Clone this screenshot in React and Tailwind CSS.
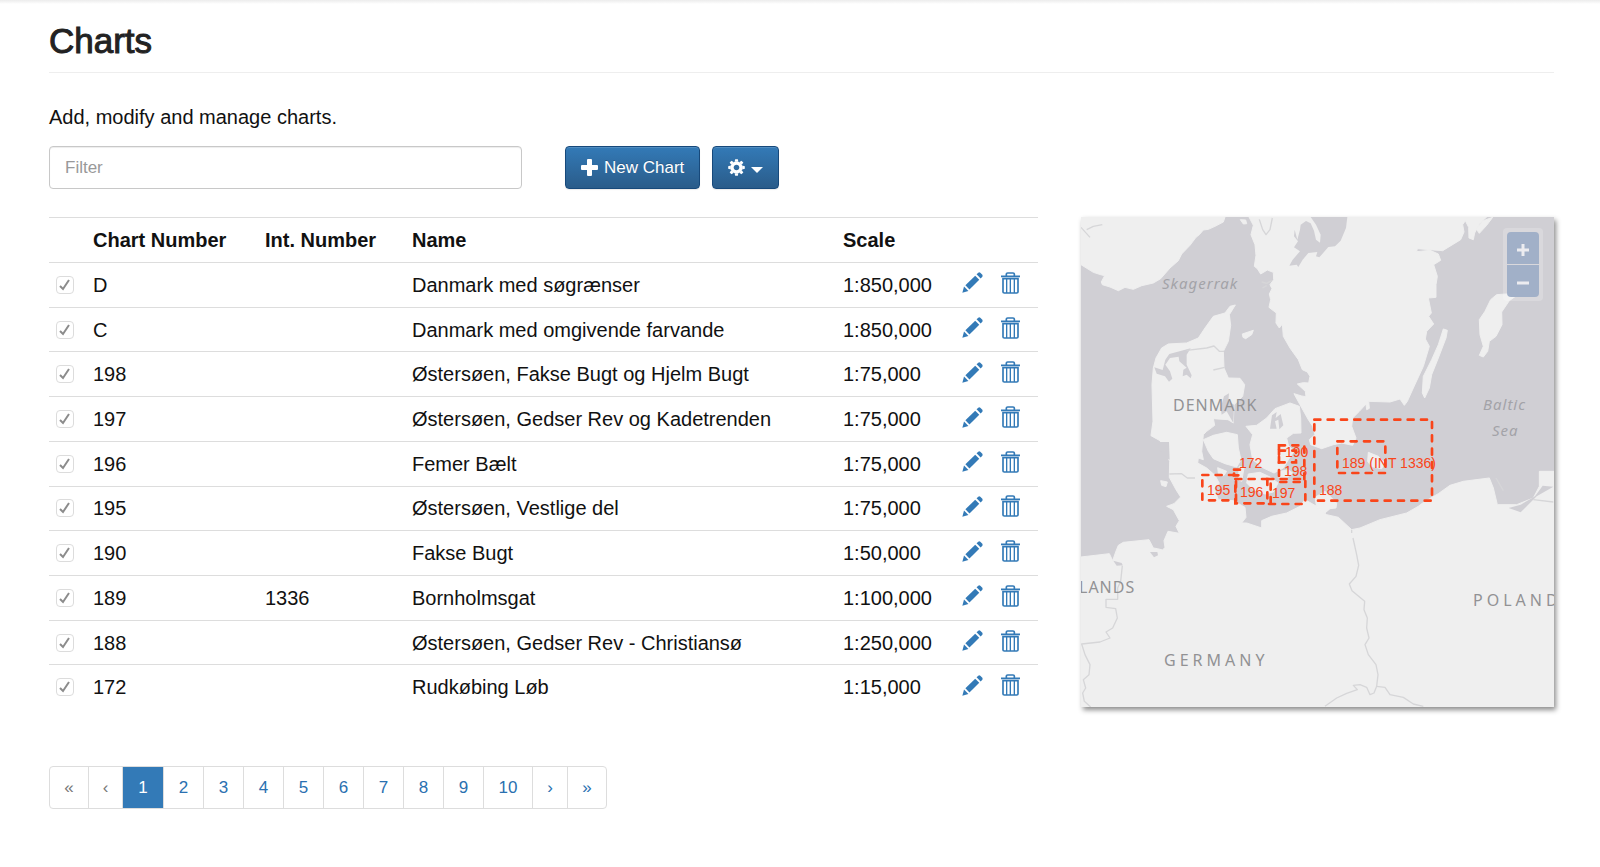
import React from "react";

const charts = [
  ["D", "", "Danmark med søgrænser", "1:850,000"],
  ["C", "", "Danmark med omgivende farvande", "1:850,000"],
  ["198", "", "Østersøen, Fakse Bugt og Hjelm Bugt", "1:75,000"],
  ["197", "", "Østersøen, Gedser Rev og Kadetrenden", "1:75,000"],
  ["196", "", "Femer Bælt", "1:75,000"],
  ["195", "", "Østersøen, Vestlige del", "1:75,000"],
  ["190", "", "Fakse Bugt", "1:50,000"],
  ["189", "1336", "Bornholmsgat", "1:100,000"],
  ["188", "", "Østersøen, Gedser Rev - Christiansø", "1:250,000"],
  ["172", "", "Rudkøbing Løb", "1:15,000"],
];

const land = [
  // Norway
  "M33 37H465L460 52L435 65L415 74L400 76L388 90L378 98L360 122L335 148L325 168L300 190L272 222L250 235L215 243L190 254L165 248L145 258L120 247L97 240L94 232L104 213L92 210L70 203L33 180Z",
  // Sweden
  "M537 37L550 62L543 90L555 120L558 152L553 185L562 192L572 208L592 196L610 203L611 225L600 240L606 252L598 268L602 285L597 308L619 325L618 355L628 370L637 358L640 395L660 430L685 465L697 495L712 502L720 515L716 535L700 534L682 538L706 560L708 576L695 574L672 567L690 600L715 645L728 665L735 690L718 705L722 720L755 732L790 720L815 715L848 722L858 700L845 665L848 640L868 620L888 598L890 615L898 611L896 590L960 592L990 583L1003 602L1012 590L1030 550L1060 485L1078 425L1066 403L1070 380L1091 358L1076 335L1084 325L1075 280L1098 278L1098 240L1102 215L1091 180L1112 167L1105 148L1080 137L1040 141L1042 132L1118 138L1172 105L1182 82L1178 60L1186 48L1196 68L1197 100L1210 105L1214 85L1228 57L1250 37Z",
  // Jutland and the mainland
  "M33 1057L118 1047L128 1068L137 1042L145 1022L160 1013L237 1005L250 1030L262 1032L278 1036L285 1028L282 1008L294 980L328 986L318 965L328 948L310 915L290 905L312 897L332 877L318 855L298 818L299 770L285 735L270 708L243 693L249 650L246 540L250 490L258 460L275 430L295 418L350 415L385 400L405 370L430 335L465 325L480 305L496 301L478 330L482 362L475 410L460 440L462 490L475 520L510 521L524 540L518 575L492 600L490 655L474 645L430 642L434 662L410 680L400 690L395 740L400 765L385 760L383 775L410 790L435 812L448 836L432 850L445 885L490 888L525 908L528 938L515 955L530 955L575 970L575 948L605 935L650 925L690 905L705 885L740 905L770 930L805 938L845 975L870 970L930 945L1010 925L1045 905L1062 892L1105 867L1140 842L1180 830L1258 820L1270 850L1282 900L1340 900L1390 880L1408 845V800H1452V1507H33Z",
  // Funen, Zealand and the southern isles
  "M400 705L430 692L470 683L502 690L505 730L513 765L500 787L465 777L430 762L415 740Z",
  "M528 665L560 662L590 640L615 612L660 595L688 605L692 640L693 685L670 686L650 700L655 722L672 740L655 765L640 790L612 805L580 790L548 765L540 720L548 690Z",
  "M535 808L570 803L600 817L624 835L610 862L585 868L550 855L530 835Z",
  "M630 800L655 795L668 805L648 820L625 818Z",
  "M508 785L522 790L515 830L505 825Z",
  "M443 789L470 800L462 812L445 806Z",
  // Rügen, Bornholm, Læsø, Öland, Gotland
  "M735 878L765 860L800 895L798 910L780 912L765 925L740 908Z",
  "M895 743L925 755L945 775L935 792L905 786L893 770Z",
  "M517 388L550 377L545 390L527 402L519 398Z",
  "M1120 373L1132 377L1128 400L1105 460L1085 510L1078 550L1064 580L1057 565L1060 515L1085 465L1105 420Z",
  "M1345 256L1350 265L1318 288L1295 322L1296 360L1278 395L1258 410L1253 440L1240 457L1228 452L1240 425L1230 390L1228 345L1245 320L1262 285L1280 270L1310 268L1325 260Z",
  "M1218 72L1240 48L1268 38L1250 62L1228 86Z",
  "M511 45L527 46L530 57L520 58Z",
  "M272 828L292 832L288 846L275 842Z",
];

const water = [
  // Vänern
  "M674 75L682 105L690 75L692 60L708 49L722 56L732 78L738 105L750 114L752 90L738 60L722 37H832L828 70L812 108L795 125L775 127L748 158L738 155L742 142L715 145L698 165L685 187L680 180L658 183L668 165L690 140L672 128L684 110L672 95Z",
  // Limfjord
  "M298 448L362 431L350 450L350 480L365 512L362 521L350 510L338 515L340 495L350 489L328 470L326 456L300 460L286 480L300 500L307 522L297 531L285 515L260 507L253 488L278 496L286 465Z",
  // Small inlets
  "M600 672L606 632L620 622L617 640L632 628L640 662L628 674L625 645L615 650L620 672Z",
  "M452 610L462 575L477 566L475 590L492 600L490 655L470 620L455 630Z",
  "M1316 910L1352 900L1395 875L1418 843L1450 846L1400 875L1352 923Z",
  "M240 1042L262 1042L264 1052L252 1058Z",
  "M130 1068L155 1075L158 1082L140 1083Z",
  "M262 712L297 712L299 765L285 758L285 738L270 740Z",
];

const borders = [
  "M157 1083L152 1130L143 1150V1184H108L108 1208L137 1212L142 1240L128 1270L108 1282L120 1300L90 1312L35 1318L45 1350L60 1380L57 1410L40 1425L47 1450L38 1465L43 1490L62 1507",
  "M298 808L335 807L352 820L375 820",
  "M845 975V985M849 1000L860 1050L866 1082L858 1115L838 1138L846 1158L884 1190L882 1215L892 1240L890 1270L897 1300L885 1320L895 1350L918 1380L924 1410L920 1445L912 1465L900 1470L890 1448L870 1440L850 1442L862 1455L830 1466L800 1480L765 1505",
  "M920 1445L945 1448L960 1470L1000 1478L1030 1498L1060 1505",
  "M33 68L60 98M50 75L70 65L97 60",
  "M350 437L410 430L432 424L448 440L462 440M430 496L464 488",
  "M568 44L578 75L588 90L600 75L607 40",
  "M1390 885L1450 892M1278 820L1300 858",
  "M575 232L590 236L605 228M577 250L590 243",
];

// x, y, right, bottom
const outlines = [
  [733, 645, 1086, 888],
  [802, 710, 946, 805],
  [397, 811, 498, 887],
  [496, 823, 602, 896],
  [592, 823, 706, 898],
  [627, 722, 703, 832],
  [627, 738, 678, 773],
  [492, 795, 510, 812],
];

const chartLabels = [
  [158, 251, "172"],
  [126, 278, "195"],
  [159, 280, "196"],
  [191, 281, "197"],
  [204, 240, "190"],
  [203, 259, "198"],
  [261, 251, "189 (INT 1336)"],
  [238, 278, "188"],
];

function ChartMap() {
  return (
    <div className="relative h-[490px] bg-[#d0cfd4] shadow-[2px_3px_5px_rgba(0,0,0,0.45)]">
      <svg
        viewBox="0 0 473 490"
        preserveAspectRatio="xMidYMid slice"
        className="block h-full w-full"
        role="img"
        aria-label="Chart map"
      >
        <g transform="scale(0.33333) translate(-33 -37)" strokeLinejoin="round">
          {land.map((d) => (
            <path key={d} d={d} fill="#efefef" stroke="#efefef" strokeWidth="3" />
          ))}
          {water.map((d) => (
            <path key={d} d={d} fill="#d0cfd4" />
          ))}
          {borders.map((d) => (
            <path key={d} d={d} fill="none" stroke="#d6d6d8" strokeWidth="4" />
          ))}
        </g>
        <g className="font-['Noto_Sans',sans-serif] text-[16px]" fill="#929294">
          <text x="92" y="194" className="tracking-[1px]">DENMARK</text>
          <text x="83" y="449" className="tracking-[4px]">GERMANY</text>
          <text x="-2" y="376" className="tracking-[1px]">LANDS</text>
          <text x="392" y="389" className="tracking-[4px]">POLAND</text>
          <g fontStyle="italic" fill="#a3a3a8" className="text-[15px]">
            <text x="81" y="72" className="tracking-[1px]">Skagerrak</text>
            <text x="402" y="193" className="tracking-[1px]">Baltic</text>
            <text x="411" y="219" className="tracking-[1px]">Sea</text>
          </g>
        </g>
        <g transform="scale(0.33333) translate(-33 -37)">
          {outlines.map(([x, y, r, b]) => (
            <rect
              key={`${x}-${y}-${r}`}
              x={x}
              y={y}
              width={r - x}
              height={b - y}
              fill="none"
              stroke="#f9451a"
              strokeWidth="8"
              strokeDasharray="18 22"
              strokeLinecap="round"
            />
          ))}
        </g>
        <g className="font-['Liberation_Sans',sans-serif] text-[14px]" fill="#f9451a">
          {chartLabels.map(([x, y, label]) => (
            <text key={label} x={x} y={y}>{label}</text>
          ))}
        </g>
      </svg>
      <div className="absolute top-[11px] right-[11px] flex w-10 flex-col gap-px rounded bg-white/20 p-1 text-2xl font-bold text-[#ececf0]">
        <button type="button" aria-label="Zoom in" className="flex h-8 items-center justify-center rounded-t-sm bg-[#a1b0c8] pt-1">
          <svg viewBox="0 0 12 12" className="h-3 w-3" fill="none" stroke="currentColor" strokeWidth="3">
            <path d="M0 6H12M6 0V12" />
          </svg>
        </button>
        <button type="button" aria-label="Zoom out" className="flex h-8 items-center justify-center rounded-b-sm bg-[#a1b0c8] pt-1">
          <svg viewBox="0 0 12 12" className="h-3 w-3" fill="none" stroke="currentColor" strokeWidth="3">
            <path d="M0 6H12" />
          </svg>
        </button>
      </div>
    </div>
  );
}

function PencilIcon() {
  return (
    <svg viewBox="0 0 62 62" className="h-[21px] w-[21px]" fill="currentColor" aria-hidden="true">
      <path d="M1 61L6 43L19 56Z" />
      <path d="M10 39L39 11L51 23L22 52Z" />
      <path d="M43 7L48 2Q51 0 54 2L60 8Q62 11 60 14L55 19Z" />
    </svg>
  );
}

function TrashIcon() {
  return (
    <svg viewBox="0 0 57 66" className="h-[22px] w-[19px]" fill="none" stroke="currentColor" strokeWidth="5" aria-hidden="true">
      <path d="M0 13H57M16 12V6Q16 3 20 3H36Q40 3 40 6V12" />
      <path d="M6 20H51V60Q51 63 47 63H10Q6 63 6 60Z" />
      <path d="M17 20V63M28 20V63M40 20V63" strokeWidth="4" />
    </svg>
  );
}

function Checkbox({ label }) {
  return (
    <span className="grid h-[18px] w-[18px] place-items-center">
      <input
        type="checkbox"
        defaultChecked
        aria-label={label}
        className="peer col-start-1 row-start-1 h-[18px] w-[18px] appearance-none rounded border border-[#dcdcdc] bg-white"
      />
      <svg
        viewBox="0 0 12 12"
        className="pointer-events-none invisible col-start-1 row-start-1 h-3 w-3 text-[#8c8c8c] peer-checked:visible"
        fill="none"
        stroke="currentColor"
        strokeWidth="2"
        aria-hidden="true"
      >
        <path d="M1 7L4 10L10 1" />
      </svg>
    </span>
  );
}

const gearTeeth = [0, 45, 90, 135, 180, 225, 270, 315];

const primaryButton =
  "flex h-[43px] items-center rounded border border-[#17497b] bg-linear-to-b from-[#337ab7] to-[#2a5c8a] text-[17px] text-white shadow-[inset_0_1px_0_rgba(255,255,255,0.15),0_1px_1px_rgba(0,0,0,0.08)] [text-shadow:0_-1px_0_rgba(0,0,0,0.2)]";

const pages = [
  ["«", "w-[38px] text-[#777777]"],
  ["‹", "w-[33px] text-[#777777]"],
  ["1", "w-10 bg-[#337ab7] text-white"],
  ["2", "w-[39px]"],
  ["3", "w-[39px]"],
  ["4", "w-[39px]"],
  ["5", "w-[39px]"],
  ["6", "w-[39px]"],
  ["7", "w-[39px]"],
  ["8", "w-[39px]"],
  ["9", "w-[39px]"],
  ["10", "w-12"],
  ["›", "w-[34px]"],
  ["»", "w-[38px]"],
];

export default function App() {
  return (
    <div className="min-h-screen bg-white pb-14 font-['Liberation_Sans',Arial,sans-serif] text-[20px] leading-7 text-[#111111]">
      <div className="h-1 bg-linear-to-b from-[#ececec] to-white" />
      <main className="pr-[46px] pl-[49px]">
        <h1 className="border-b border-[#eeeeee] pt-[17px] pb-[11px] text-[35px] leading-10 font-medium text-[#222222] [-webkit-text-stroke:1px_#222222]">
          Charts
        </h1>
        <p className="mt-[30px]">Add, modify and manage charts.</p>

        <div className="mt-[15px] grid grid-cols-3 gap-x-[43px]">
          <input
            type="text"
            aria-label="Filter"
            placeholder="Filter"
            className="h-[43px] w-full rounded border border-[#c8c8c8] px-[15px] text-[17px] shadow-[inset_0_1px_1px_rgba(0,0,0,0.075)] placeholder:text-[#999999]"
          />
          <div className="col-span-2 flex gap-3">
            <button type="button" className={`${primaryButton} gap-[6px] px-[15px]`}>
              <svg viewBox="0 0 17 17" className="h-[17px] w-[17px]" fill="currentColor" aria-hidden="true">
                <path d="M6 1Q6 0 7 0H10Q11 0 11 1V6H16Q17 6 17 7V10Q17 11 16 11H11V16Q11 17 10 17H7Q6 17 6 16V11H1Q0 11 0 10V7Q0 6 1 6H6Z" />
              </svg>
              New Chart
            </button>
            <button type="button" aria-label="Chart actions" className={`${primaryButton} gap-[6px] px-[15px]`}>
              <svg viewBox="-9 -9 18 18" className="h-[17px] w-[17px]" aria-hidden="true">
                <circle r="4.7" fill="none" stroke="currentColor" strokeWidth="3.4" />
                {gearTeeth.map((a) => (
                  <path key={a} d="M-2 -6L-1.4 -8.8H1.4L2 -6Z" fill="currentColor" transform={`rotate(${a})`} />
                ))}
              </svg>
              <svg viewBox="0 0 12 6" className="mt-1 h-[6px] w-3" fill="currentColor" aria-hidden="true">
                <path d="M0 0H12L6 6Z" />
              </svg>
            </button>
          </div>
        </div>

        <div className="mt-[28px] grid grid-cols-3 items-start gap-x-[43px]">
          <table className="col-span-2 h-[492px] w-full table-fixed border-collapse text-left">
            <colgroup>
              <col className="w-9" />
              <col className="w-[172px]" />
              <col className="w-[147px]" />
              <col />
              <col className="w-[119px]" />
              <col className="w-[84px]" />
            </colgroup>
            <thead>
              <tr className="h-[45px] border-t border-[#dddddd]">
                <td />
                <th className="px-2 font-bold">Chart Number</th>
                <th className="px-2 font-bold">Int. Number</th>
                <th className="px-2 font-bold">Name</th>
                <th className="px-2 font-bold">Scale</th>
                <td />
              </tr>
            </thead>
            <tbody>
              {charts.map(([number, intNumber, name, scale]) => (
                <tr key={number} className="border-t border-[#dddddd]">
                  <td className="pl-[7px]">
                    <Checkbox label={`Show chart ${number}`} />
                  </td>
                  <td className="px-2">{number}</td>
                  <td className="px-2">{intNumber}</td>
                  <td className="px-2">{name}</td>
                  <td className="px-2">{scale}</td>
                  <td>
                    <div className="flex items-center gap-[18px] pb-1 pl-2 text-[#337ab7]">
                      <button type="button" aria-label={`Edit chart ${number}`}>
                        <PencilIcon />
                      </button>
                      <button type="button" aria-label={`Delete chart ${number}`}>
                        <TrashIcon />
                      </button>
                    </div>
                  </td>
                </tr>
              ))}
            </tbody>
          </table>
          <ChartMap />
        </div>

        <nav aria-label="Pagination" className="mt-[57px]">
          <ul className="flex w-fit divide-x divide-[#dddddd] overflow-hidden rounded border border-[#dddddd] text-[17px] text-[#2a70b0]">
            {pages.map(([label, style]) => (
              <li key={label} className="flex">
                <a
                  href="#"
                  aria-current={label === "1" ? "page" : undefined}
                  className={`flex h-[41px] items-center justify-center ${style}`}
                >
                  {label}
                </a>
              </li>
            ))}
          </ul>
        </nav>
      </main>
    </div>
  );
}
